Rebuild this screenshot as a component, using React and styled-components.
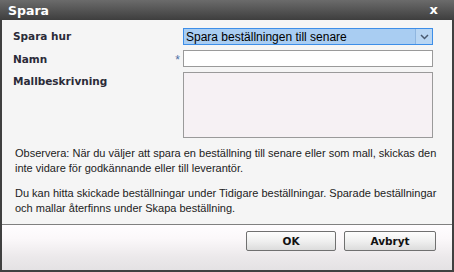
import React from "react";
import styled, { createGlobalStyle } from "styled-components";

const Global = createGlobalStyle`
  html, body { margin: 0; padding: 0; background: #f5f5f5; }
  body { font-family: Tahoma, "DejaVu Sans", "Liberation Sans", sans-serif; }
`;

const Dialog = styled.div`
  width: 454px;
  height: 272px;
  display: flex;
  flex-direction: column;
  box-sizing: border-box;
  background: #f5f5f5;
`;

const TitleBar = styled.div`
  height: 20px;
  flex: none;
  display: flex;
  align-items: center;
  justify-content: space-between;
  padding: 0 16px 0 8px;
  background: linear-gradient(#6b6b6b, #3e3e3e);
  color: #fff;
  font-family: "DejaVu Sans", sans-serif;
  font-weight: bold;
  font-size: 12.5px;
`;

const Close = styled.span`
  font-size: 13px;
  font-weight: bold;
  line-height: 1;
  margin-top: -1px;
`;

const Body = styled.div`
  flex: 1;
  display: flex;
  flex-direction: column;
  border-left: 2px solid #404040;
  border-right: 2px solid #404040;
  border-bottom: 2px solid #404040;
`;

const Content = styled.div`
  flex: 1;
  padding: 8px 12px 0 11px;
`;

const Form = styled.div`
  display: grid;
  grid-template-columns: 155px 15px 250px;
  row-gap: 5px;
`;

const Label = styled.div`
  font-family: "DejaVu Sans", sans-serif;
  font-weight: bold;
  font-size: 10.5px;
  color: #2b2b38;
  padding-top: ${(p) => p.$top || 3}px;
`;

const Star = styled.div`
  font-family: "Liberation Sans", sans-serif;
  font-size: 12px;
  color: #4a6fa5;
  text-align: right;
  padding-right: 3px;
  padding-top: 3px;
`;

const Select = styled.div`
  height: 17px;
  box-sizing: border-box;
  border: 1px solid #3d8ee8;
  background: #a9cdf2;
  display: flex;
  align-items: center;
  font-family: "Liberation Sans", sans-serif;
  font-size: 12px;
  color: #000;
`;

const SelectText = styled.span`
  flex: 1;
  padding-left: 2px;
`;

const Arrow = styled.div`
  width: 17px;
  height: 100%;
  box-sizing: border-box;
  border-left: 1px solid #8fb6e0;
  background: #b9d6f3;
  display: flex;
  align-items: center;
  justify-content: center;
`;

const Input = styled.div`
  height: 17px;
  box-sizing: border-box;
  border: 1px solid #9a9a9a;
  background: #fff;
`;

const TextArea = styled.div`
  height: 66px;
  box-sizing: border-box;
  border: 1px solid #9a9a9a;
  background: #f6f1f4;
`;

const Info = styled.p`
  margin: ${(p) => p.$mt}px 0 0 2px;
  font-family: "Liberation Sans", sans-serif;
  font-size: 11px;
  line-height: 15px;
  color: #222;
`;

const Footer = styled.div`
  height: 39px;
  flex: none;
  border-top: 1px solid #808080;
  background: linear-gradient(#fffdff 0%, #fbf8fa 30%, #ece9eb 70%, #e4e2e4 100%);
  display: flex;
  justify-content: flex-end;
  align-items: flex-start;
  gap: 8px;
  padding: 6px 16px 0 0;
`;

const Button = styled.button`
  width: ${(p) => p.$w}px;
  height: 20px;
  box-sizing: border-box;
  border: 1px solid #707070;
  border-radius: 2px;
  background: linear-gradient(#fdfdfd 0%, #f0f0f0 50%, #dcdcdc 100%);
  font-family: "DejaVu Sans", sans-serif;
  font-weight: bold;
  font-size: 10.5px;
  color: #111;
  padding: 0;
`;

export default function App() {
  return (
    <Dialog>
      <Global />
      <TitleBar>
        <span>Spara</span>
        <Close>x</Close>
      </TitleBar>
      <Body>
        <Content>
          <Form>
            <Label $top={2}>Spara hur</Label>
            <div />
            <Select>
              <SelectText>Spara beställningen till senare</SelectText>
              <Arrow>
                <svg width="9" height="6" viewBox="0 0 9 6">
                  <path d="M1 1 L4.5 4.5 L8 1" fill="none" stroke="#4a5a70" strokeWidth="1.5" />
                </svg>
              </Arrow>
            </Select>
            <Label>Namn</Label>
            <Star>*</Star>
            <Input />
            <Label>Mallbeskrivning</Label>
            <div />
            <TextArea />
          </Form>
          <Info $mt={8}>
            Observera: När du väljer att spara en beställning till senare eller som mall, skickas den
            inte vidare för godkännande eller till leverantör.
          </Info>
          <Info $mt={10}>
            Du kan hitta skickade beställningar under Tidigare beställningar. Sparade beställningar
            och mallar återfinns under Skapa beställning.
          </Info>
        </Content>
        <Footer>
          <Button $w={90}>OK</Button>
          <Button $w={92}>Avbryt</Button>
        </Footer>
      </Body>
    </Dialog>
  );
}
